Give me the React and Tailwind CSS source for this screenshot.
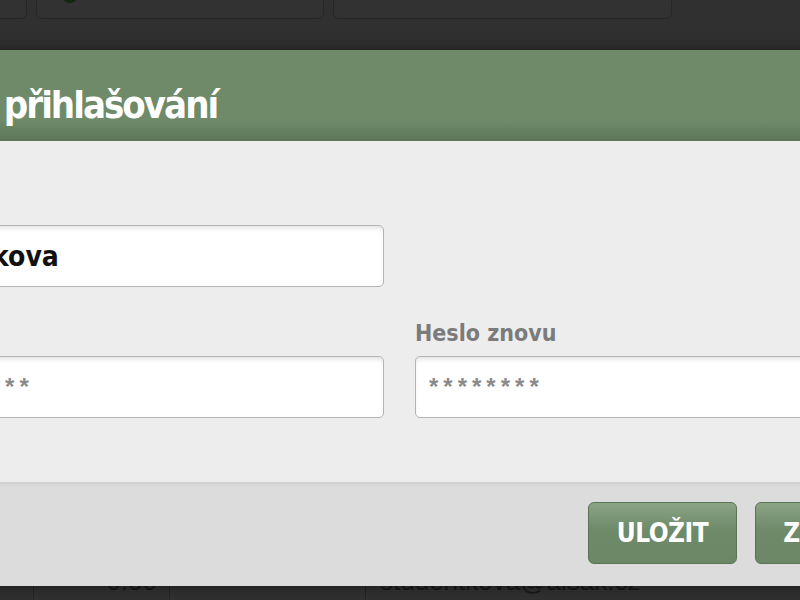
import React from "react";

const narrow = "font-['Liberation_Sans_Narrow','DejaVu_Sans_Condensed','Liberation_Sans',sans-serif]";

const Field = ({ label, type = "text", value, placeholder }) => {
  return (
    <div>
      <div className={`mb-[6px] h-[34px] text-[23px] font-bold leading-[34px] text-[#7b7b7b] ${narrow}`}>
        {label}
      </div>
      {type === "password" ? (
        <input
          type="password"
          readOnly
          placeholder={placeholder}
          className="h-[62px] w-full rounded-[5px] border border-[#b4b4b4] bg-white px-[13px] font-['Liberation_Sans',sans-serif] text-[24px] font-bold tracking-[5px] text-[#8a8a8a] shadow-[inset_0_4px_5px_-2px_rgba(0,0,0,0.12)] outline-none placeholder:text-[#8a8a8a]"
        />
      ) : (
        <input
          type="text"
          readOnly
          value={value}
          className={`h-[62px] w-full rounded-[5px] border border-[#b4b4b4] bg-white px-[13px] indent-[-37px] text-[28px] font-bold text-[#111] shadow-[inset_0_4px_5px_-2px_rgba(0,0,0,0.12)] outline-none ${narrow}`}
        />
      )}
    </div>
  );
};

export default function App() {
  return (
    <div className="relative h-[600px] w-[800px] overflow-hidden bg-[#303030] font-['Liberation_Sans',sans-serif]">
      {/* stranka pod dialogem */}
      <div className="flex h-full flex-col">
        <div className="-ml-[73px] -mt-[21px] flex gap-[9px]">
          <div className="h-[40px] w-[100px] rounded-[6px] border border-[#262626] bg-[#323232]" />
          <div className="flex h-[40px] w-[288px] items-start rounded-[6px] border border-[#262626] bg-[#323232] pl-[25px]">
            <span className="mt-[7px] h-[16px] w-[16px] rounded-full bg-[#162414]" />
          </div>
          <div className="h-[40px] w-[339px] rounded-[6px] border border-[#262626] bg-[#323232]" />
        </div>
        <div className="mt-auto flex h-[40px] text-[26px] leading-none text-[#181818]">
          <div className="w-[34px] border-r border-[#242424]" />
          <div className="w-[136px] border-r border-[#242424] pr-[12px] pt-[8px] text-right">0.00</div>
          <div className="w-[196px] border-r border-[#242424]" />
          <div className="flex-1 pl-[14px] pt-[8px]">studentkova@aisak.cz</div>
        </div>
      </div>

      {/* dialog */}
      <div className="absolute left-[-260px] top-[50px] flex h-[536px] w-[1260px] flex-col shadow-[0_0_12px_rgba(0,0,0,0.5)]">
        <div className="h-[91px] bg-[linear-gradient(to_bottom,#6e8a69_0%,#6e8a69_78%,#5c7657_100%)] pl-[85px] pt-[36px]">
          <h2 className={`whitespace-nowrap text-[38px] font-bold leading-none tracking-[-2px] text-white ${narrow}`}>
            Údaje pro přihlašování
          </h2>
        </div>

        <div className="flex-1 bg-[#ededed] pl-[165px] pt-[44px]">
          <div className="grid grid-cols-[479px_479px] gap-x-[31px] gap-y-[29px]">
            <Field label="Jméno" value="studentkova" />
            <div />
            <Field label="Heslo" type="password" placeholder="********" />
            <Field label="Heslo znovu" type="password" placeholder="********" />
          </div>
        </div>

        <div className="flex h-[104px] items-start justify-end gap-[18px] border-t border-[#d0d0d0] bg-[#dcdcdc] pr-[96px] pt-[19px] shadow-[inset_0_3px_4px_-2px_rgba(0,0,0,0.08)]">
          <button className={`h-[62px] w-[149px] rounded-[6px] border border-[#5a7355] bg-[linear-gradient(to_bottom,#8aa484_0%,#6e8a69_45%,#6b8766_100%)] text-[26px] font-bold tracking-[-0.5px] text-white ${narrow}`}>
            ULOŽIT
          </button>
          <button className={`h-[62px] w-[149px] rounded-[6px] border border-[#5a7355] bg-[linear-gradient(to_bottom,#8aa484_0%,#6e8a69_45%,#6b8766_100%)] text-[26px] font-bold tracking-[-0.5px] text-white ${narrow}`}>
            ZRUŠIT
          </button>
        </div>
      </div>
    </div>
  );
}
